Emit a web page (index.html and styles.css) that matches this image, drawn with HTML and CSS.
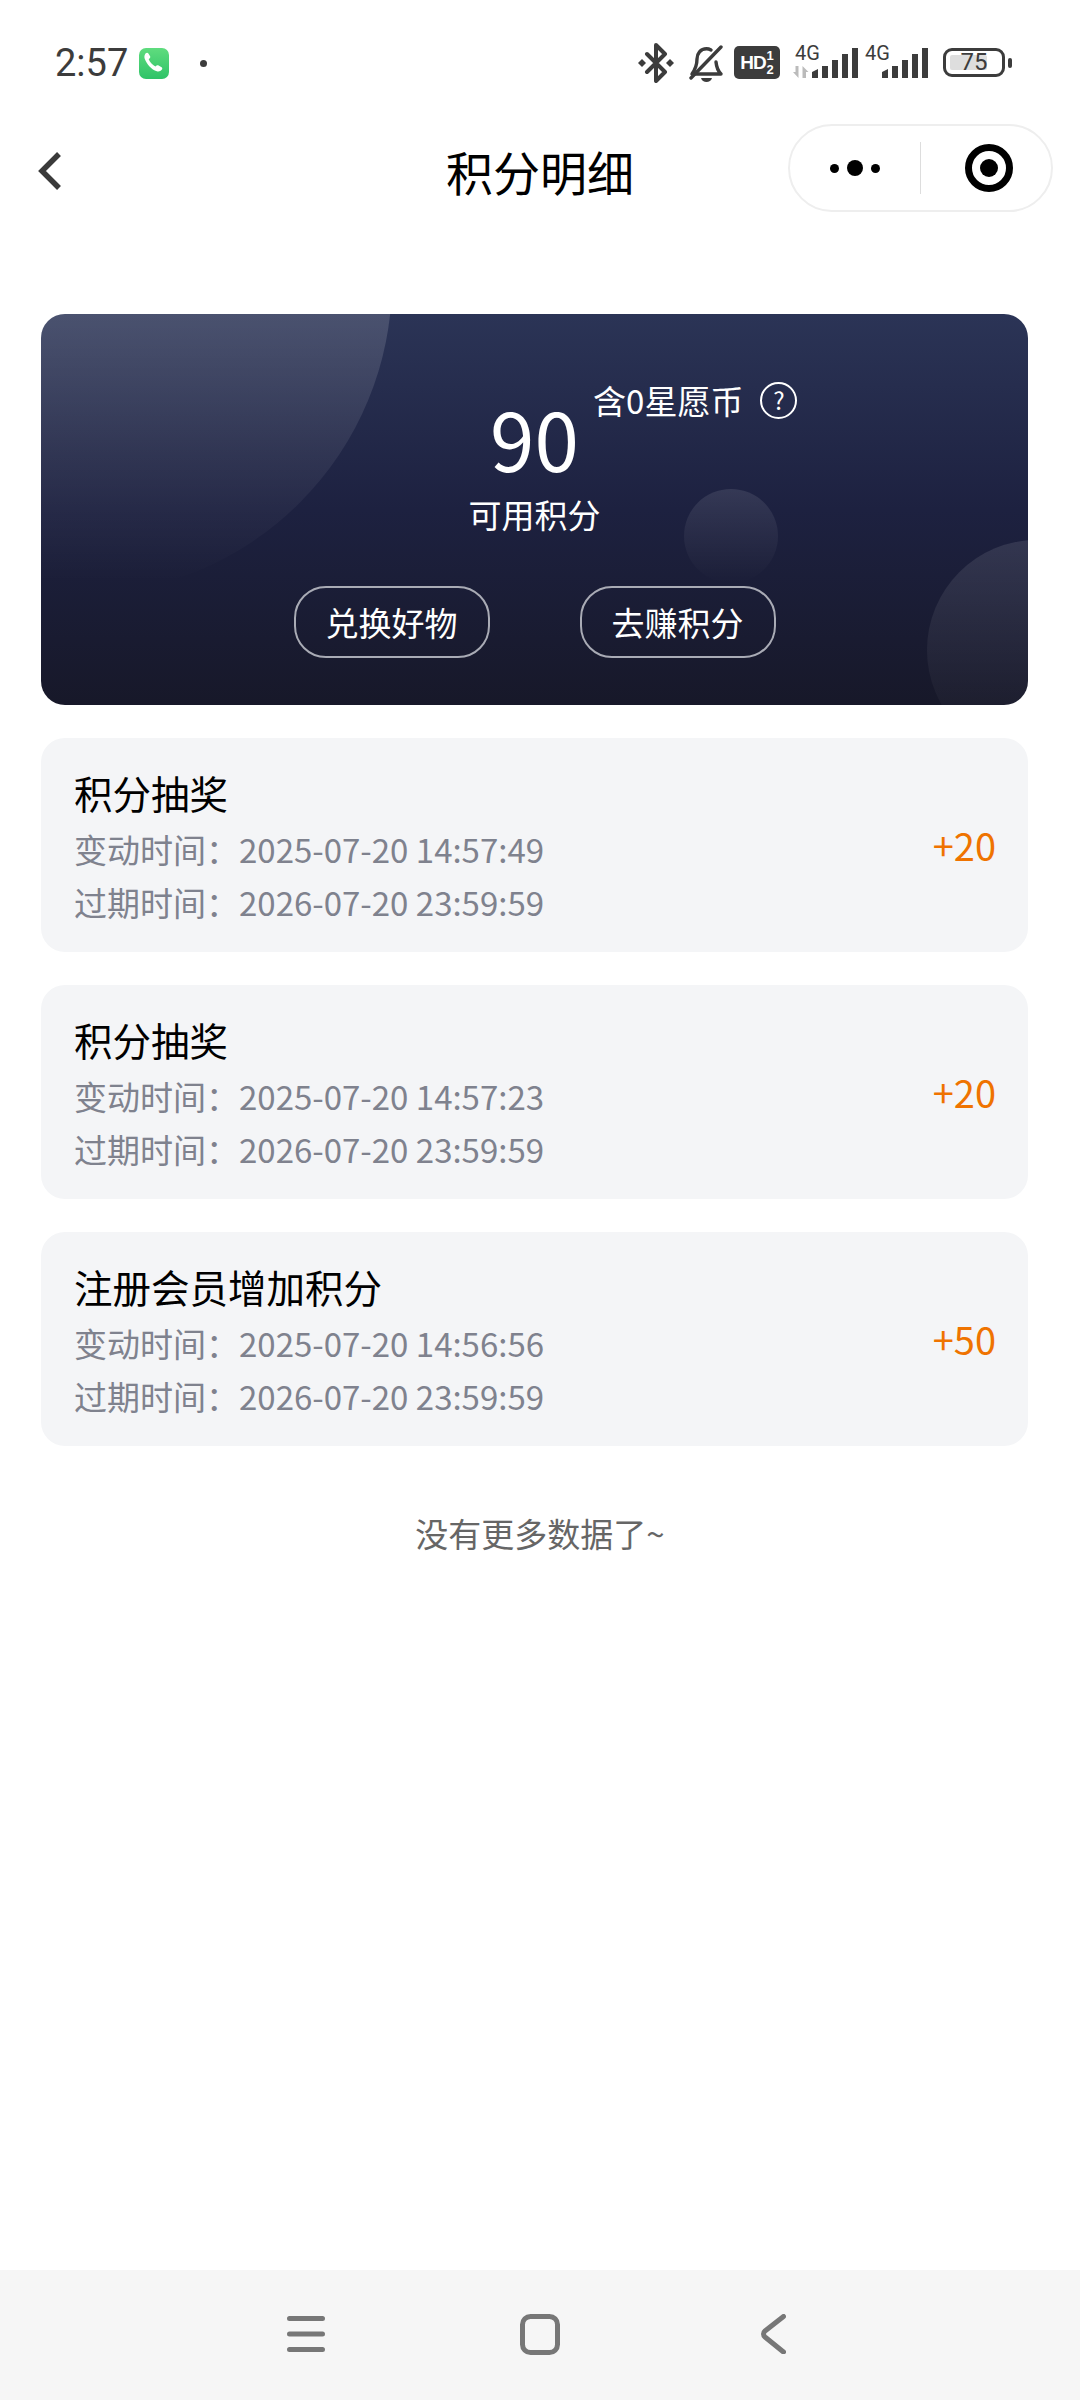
FILE: index.html
```html
<!DOCTYPE html>
<html lang="zh-CN">
<head>
    <meta charset="UTF-8">
    <meta name="viewport" content="width=device-width, initial-scale=1.0">
    <title>积分明细</title>
    <link rel="stylesheet" href="styles.css">
</head>
<body>
    <div class="page">
        <!-- Status bar -->
        <div class="status-bar">
            <div class="status-left">
                <span class="status-time">2:57</span>
                <svg class="icon-phone" width="30" height="31" viewBox="0 0 30 31">
                    <defs>
                        <linearGradient id="phone-bg" x1="0" y1="0" x2="0" y2="1">
                            <stop offset="0" stop-color="#5fdc7e"/>
                            <stop offset="1" stop-color="#2fc368"/>
                        </linearGradient>
                    </defs>
                    <rect width="30" height="31" rx="7" fill="url(#phone-bg)"/>
                    <path d="M6.500 5.500c1-.9 2.200-1 2.900 0l1.700 2.800c.4.7.2 1.400-.4 2l-1 1c1 2.700 3.600 5.700 6.700 7.300l1.200-1c.6-.5 1.300-.6 2-.2l3 1.800c.9.6.9 1.700.1 2.600-1.200 1.400-3 2-4.900 1.400C12.500 21.500 7.800 16.400 5.700 10.700c-.6-1.800-.3-3.800.8-5.200z" fill="#fff"/>
                </svg>
                <span class="status-dot"></span>
            </div>
            <div class="status-right">
                <svg class="icon-bt" width="36" height="40" viewBox="0 0 36 40">
                    <path d="M9 11l18 18-9 9V2l9 9L9 29" fill="none" stroke="#3c3c3c" stroke-width="4" stroke-linejoin="round" stroke-linecap="round"/>
                    <path d="M4 16l4 4-4 4-4-4zM32 16l4 4-4 4-4-4z" fill="#3c3c3c"/>
                </svg>
                <svg class="icon-bell" width="35" height="38" viewBox="0 0 35 38">
                    <path d="M3 29h29c-3.500-3.500-4.500-7-5-12M22 5c-1.500-.8-3-1.200-4.500-1.200C11.500 3.800 8 8.500 8 14c0 6-1.800 10.500-5 15" fill="none" stroke="#3c3c3c" stroke-width="3.400" stroke-linejoin="round" stroke-linecap="round"/>
                    <path d="M2 33L32 2" stroke="#3c3c3c" stroke-width="3.400" stroke-linecap="round"/>
                    <path d="M12 33h11c-.6 2.400-3 4-5.500 4S12.600 35.400 12 33z" fill="#3c3c3c"/>
                </svg>
                <span class="hd-badge">
                    <b>HD</b>
                    <span class="hd-sim"><i>1</i><i>2</i></span>
                </span>
                <div class="signal signal-first">
                    <span class="signal-type">4G</span>
                    <svg class="signal-arrows" width="16" height="12" viewBox="0 0 16 12">
                        <path d="M0 6h2.500v-6h3v12zM9.500 0l6 6h-2.500v6h-3.500z" fill="#bbb"/>
                    </svg>
                    <svg class="signal-bars" width="46" height="30" viewBox="0 0 46 30">
                        <path d="M0 24l6-3v9h-6zM10 18h6v12h-6zM20 12h6v18h-6zM30 6h6v24h-6zM40 0h6v30h-6z" fill="#3c3c3c"/>
                    </svg>
                </div>
                <div class="signal">
                    <span class="signal-type">4G</span>
                    <svg class="signal-bars" width="46" height="30" viewBox="0 0 46 30">
                        <path d="M0 24l6-3v9h-6zM10 18h6v12h-6zM20 12h6v18h-6zM30 6h6v24h-6zM40 0h6v30h-6z" fill="#3c3c3c"/>
                    </svg>
                </div>
                <div class="battery">
                    <div class="battery-body">
                        <span class="battery-fill"></span>
                        <span class="battery-text">75</span>
                    </div>
                    <span class="battery-tip"></span>
                </div>
            </div>
        </div>

        <!-- Title bar -->
        <div class="title-bar">
            <svg class="back-icon" width="24" height="38" viewBox="0 0 24 38">
                <path d="M21 2L4 19l17 17" fill="none" stroke="#3a3a3a" stroke-width="5.500"/>
            </svg>
            <h1 class="page-title">积分明细</h1>
            <div class="capsule">
                <div class="capsule-more">
                    <span class="dot-small"></span>
                    <span class="dot-big"></span>
                    <span class="dot-small"></span>
                </div>
                <div class="capsule-line"></div>
                <div class="capsule-close">
                    <span class="close-ring"><span class="close-core"></span></span>
                </div>
            </div>
        </div>

        <div class="content">
            <!-- Points card -->
            <div class="points-card">
                <span class="bubble bubble-large"></span>
                <span class="bubble bubble-small"></span>
                <span class="bubble bubble-right"></span>

                <div class="points-value">
                    <span class="points-number">90</span>
                    <div class="points-note">
                        <span>含0星愿币</span>
                        <span class="help-icon">?</span>
                    </div>
                </div>
                <div class="points-label">可用积分</div>
                <div class="points-actions">
                    <button class="points-button">兑换好物</button>
                    <button class="points-button">去赚积分</button>
                </div>
            </div>

            <!-- Records -->
            <div class="record-list">
                <div class="record">
                    <div class="record-info">
                        <div class="record-title">积分抽奖</div>
                        <div class="record-time">变动时间：2025-07-20 14:57:49</div>
                        <div class="record-time">过期时间：2026-07-20 23:59:59</div>
                    </div>
                    <div class="record-points">+20</div>
                </div>
                <div class="record">
                    <div class="record-info">
                        <div class="record-title">积分抽奖</div>
                        <div class="record-time">变动时间：2025-07-20 14:57:23</div>
                        <div class="record-time">过期时间：2026-07-20 23:59:59</div>
                    </div>
                    <div class="record-points">+20</div>
                </div>
                <div class="record">
                    <div class="record-info">
                        <div class="record-title">注册会员增加积分</div>
                        <div class="record-time">变动时间：2025-07-20 14:56:56</div>
                        <div class="record-time">过期时间：2026-07-20 23:59:59</div>
                    </div>
                    <div class="record-points">+50</div>
                </div>
            </div>

            <div class="no-more">没有更多数据了~</div>
        </div>

        <!-- Android navigation -->
        <div class="nav-bar">
            <svg width="38" height="36" viewBox="0 0 38 36">
                <path d="M2.500 2.500h33M2.500 18h33M2.500 33.500h33" stroke="#777" stroke-width="5" stroke-linecap="round"/>
            </svg>
            <svg width="40" height="41" viewBox="0 0 40 41">
                <rect x="2.500" y="2.500" width="35" height="36" rx="8" fill="none" stroke="#777" stroke-width="5"/>
            </svg>
            <svg class="nav-back" width="25" height="40" viewBox="0 0 25 40">
                <path d="M22.500 2.500L4 17c-2 1.700-2 4.300 0 6l18.500 15" fill="none" stroke="#777" stroke-width="5" stroke-linecap="round"/>
            </svg>
        </div>
    </div>
</body>
</html>
```

FILE: styles.css
```css
* {
    box-sizing: border-box;
}
body {
    margin: 0;
    background-color: #fff;
    font-family: "Noto Sans CJK SC", "Noto Sans", sans-serif;
}
.page {
    display: flex;
    flex-direction: column;
    width: 1080px;
    height: 2400px;
    overflow: hidden;
}

/* Status bar */
.status-bar {
    display: flex;
    justify-content: space-between;
    height: 124px;
    padding: 43px 68px 0 55px;
    color: #3c3c3c;
}
.status-left {
    display: flex;
    align-items: flex-start;
}
.status-time {
    font-family: Roboto, sans-serif;
    font-size: 38px;
    line-height: 40px;
}
.icon-phone {
    margin: 5px 0 0 11px;
}
.status-dot {
    width: 7px;
    height: 7px;
    margin: 17px 0 0 31px;
    border-radius: 50%;
    background-color: #3c3c3c;
}
.status-right {
    display: flex;
    align-items: flex-start;
}
.icon-bell {
    margin: 2px 0 0 15px;
}
.hd-badge {
    display: flex;
    align-items: center;
    justify-content: center;
    gap: 1px;
    width: 46px;
    height: 33px;
    margin: 3px 0 0 10px;
    border-radius: 5px;
    background-color: #3c3c3c;
    color: #fff;
    font-family: "Liberation Sans", sans-serif;
}
.hd-badge b {
    font-size: 19px;
    letter-spacing: -1px;
}
.hd-sim {
    display: flex;
    flex-direction: column;
    font-size: 13px;
    font-weight: bold;
    line-height: 14px;
}
.hd-sim i {
    font-style: normal;
}
.signal {
    position: relative;
    width: 63px;
    height: 35px;
    margin-left: 7px;
}
.signal-first {
    margin-left: 15px;
}
.signal-type {
    position: absolute;
    top: 0;
    left: 0;
    font-family: Roboto, sans-serif;
    font-size: 20px;
    line-height: 20px;
}
.signal-arrows {
    position: absolute;
    bottom: 0;
    left: -2px;
}
.signal-bars {
    position: absolute;
    right: 0;
    bottom: 0;
}
.battery {
    display: flex;
    align-items: center;
    gap: 3px;
    margin: 5px 0 0 15px;
}
.battery-body {
    position: relative;
    width: 62px;
    height: 29px;
    border: 3px solid #3c3c3c;
    border-radius: 9px;
}
.battery-fill {
    position: absolute;
    top: 4px;
    bottom: 4px;
    left: 4px;
    width: 37px;
    background-color: #dedede;
    border-radius: 2px;
}
.battery-text {
    position: absolute;
    top: 0;
    right: 0;
    bottom: 0;
    left: 0;
    font-family: Roboto, sans-serif;
    font-size: 24px;
    line-height: 23px;
    text-align: center;
}
.battery-tip {
    width: 4px;
    height: 10px;
    border-radius: 2px;
    background-color: #3c3c3c;
}

/* Title bar */
.title-bar {
    display: grid;
    grid-template-columns: 265px 1fr 265px;
    align-items: center;
    height: 88px;
    padding: 0 27px;
}
.back-icon {
    margin: 5px 0 0 11px;
}
.page-title {
    margin: 5px 0 0;
    font-size: 47px;
    font-weight: 400;
    color: #000;
    text-align: center;
}
.capsule {
    display: flex;
    align-items: center;
    justify-self: end;
    width: 265px;
    height: 88px;
    border: 2px solid #eee;
    border-radius: 44px;
}
.capsule-more {
    display: flex;
    align-items: center;
    justify-content: center;
    gap: 8px;
    width: 130px;
}
.dot-small {
    width: 9px;
    height: 9px;
    border-radius: 50%;
    background-color: #000;
}
.dot-big {
    width: 16px;
    height: 16px;
    border-radius: 50%;
    background-color: #000;
}
.capsule-line {
    width: 1px;
    height: 52px;
    background-color: #ddd;
}
.capsule-close {
    display: flex;
    justify-content: center;
    flex: 1;
    padding-left: 6px;
}
.close-ring {
    display: flex;
    align-items: center;
    justify-content: center;
    width: 48px;
    height: 48px;
    border: 7px solid #000;
    border-radius: 50%;
}
.close-core {
    width: 18px;
    height: 18px;
    border-radius: 50%;
    background-color: #000;
}

/* Main content */
.content {
    flex: 1;
    padding: 102px 52px 0 41px;
}
.points-card {
    position: relative;
    display: flex;
    flex-direction: column;
    align-items: center;
    height: 391px;
    padding-top: 69px;
    overflow: hidden;
    border-radius: 24px;
    background: linear-gradient(180deg, #2b3456 0%, #1d2140 50%, #171829 100%);
    color: #fff;
}
.bubble {
    position: absolute;
    border-radius: 50%;
}
.bubble-large {
    top: -349px;
    left: -279px;
    width: 630px;
    height: 630px;
    background: linear-gradient(180deg, rgba(255, 255, 255, 0) 50%, rgba(255, 255, 255, 0.15) 55%, rgba(255, 255, 255, 0) 98%);
}
.bubble-small {
    top: 175px;
    left: 643px;
    width: 94px;
    height: 94px;
    background: linear-gradient(180deg, rgba(255, 255, 255, 0.1) 0%, rgba(255, 255, 255, 0) 100%);
}
.bubble-right {
    top: 226px;
    left: 886px;
    width: 220px;
    height: 220px;
    background: linear-gradient(180deg, rgba(255, 255, 255, 0.1) 0%, rgba(255, 255, 255, 0.01) 90%);
}
.points-value {
    position: relative;
}
.points-number {
    display: block;
    font-size: 80px;
    line-height: 108px;
}
.points-note {
    position: absolute;
    top: -10px;
    left: 103px;
    display: flex;
    align-items: center;
    gap: 17px;
    font-size: 33px;
    line-height: 54px;
    white-space: nowrap;
}
.help-icon {
    width: 37px;
    height: 37px;
    border: 2px solid #fff;
    border-radius: 50%;
    font-size: 24px;
    line-height: 32px;
    text-align: center;
}
.points-label {
    position: relative;
    font-size: 33px;
    line-height: 46px;
}
.points-actions {
    position: relative;
    display: flex;
    gap: 90px;
    margin-top: 49px;
}
.points-button {
    width: 196px;
    height: 72px;
    padding: 0;
    border: 2px solid #a9abb5;
    border-radius: 32px;
    background: transparent;
    color: #fff;
    font-family: inherit;
    font-size: 33px;
}

/* Record rows */
.record-list {
    display: flex;
    flex-direction: column;
    gap: 33px;
    margin-top: 33px;
}
.record {
    display: flex;
    align-items: center;
    justify-content: space-between;
    height: 214px;
    padding: 0 32px 0 33px;
    border-radius: 24px;
    background-color: #f4f5f7;
}
.record-title {
    font-size: 38.500px;
    line-height: 62px;
    color: #000;
}
.record-time {
    font-size: 33px;
    line-height: 53px;
    color: #7f828e;
}
.record-points {
    font-size: 38px;
    line-height: 50px;
    color: #ef7300;
}
.no-more {
    margin: 62px 0 0 11px;
    font-size: 33px;
    line-height: 50px;
    color: #666;
    text-align: center;
}

/* Android nav */
.nav-bar {
    display: flex;
    align-items: center;
    justify-content: center;
    gap: 195px;
    height: 130px;
    padding: 0 7px 2px 0;
    background-color: #f6f6f6;
}
.nav-back {
    margin-left: 6px;
}
```
